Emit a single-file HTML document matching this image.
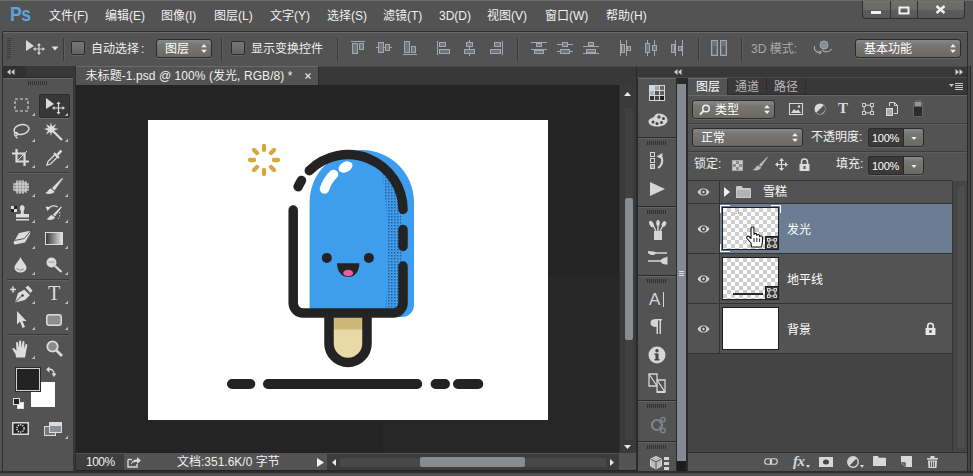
<!DOCTYPE html>
<html lang="zh-CN">
<head>
<meta charset="utf-8">
<title>未标题-1.psd @ 100% (发光, RGB/8) *</title>
<style>
html,body{margin:0;padding:0;background:#535353;}
body{width:973px;height:476px;overflow:hidden;position:relative;
 font-family:"Liberation Sans","Noto Sans CJK SC",sans-serif;font-size:12px;color:#e6e6e6;line-height:1;}
.abs{position:absolute;}
#app{position:absolute;left:0;top:0;width:973px;height:476px;background:#535353;overflow:hidden;}
#app div,#app svg,#app i,#app span{position:absolute;}
#menubar{left:0;top:0;width:973px;height:31px;background:#535353;border-top:1px solid #6b6b6b;box-sizing:border-box;}
#menubar .mi{top:9px;font-size:12px;color:#f0f0f0;white-space:nowrap;}
#pslogo{left:9.500px;top:2px;font-size:21px;font-weight:bold;color:#5ea2de;letter-spacing:-0.500px;transform:scaleX(0.840);transform-origin:0 0;font-family:"Liberation Sans",sans-serif;}
#winbtn{left:862px;top:0;width:103px;height:18px;background:linear-gradient(#747572 0,#6e6c68 12%,#6c6a66 55%,#5b5b5b 55%,#585858 100%);border:1px solid #303030;border-top:none;border-radius:0 0 4px 4px;box-sizing:border-box;}
#winbtn i{top:0;width:1px;height:17px;background:#303030;}
#optbar{left:2px;top:31px;width:966px;height:35px;background:#535353;border:1px solid #2e2e2e;border-bottom:none;box-sizing:border-box;box-shadow:inset 0 1px 0 #6a6a6a;}
.vsep{width:1px;background:#3a3a3a;box-shadow:1px 0 0 #5c5c5c;}
.chk{width:14px;height:14px;border:1px solid #2d2d2d;border-radius:2px;background:linear-gradient(#787774,#65635f);box-sizing:border-box;box-shadow:0 1px 0 #636363;}
.dd{border:1px solid #2b2b2b;border-radius:3px;background:linear-gradient(#858a92 0%,#777673 28%,#6b6964 100%);box-sizing:border-box;box-shadow:0 1px 0 #676767, inset 0 1px 0 #858585;color:#fff;}
.dd span{left:8px;top:2px;white-space:nowrap;}
.dd svg{right:4px;top:4px;}
.lbl{white-space:nowrap;color:#f0f0f0;}
.dim{color:#a9a9a9;}
.inp{background:#3a3a3a;border:1px solid #2b2b2b;border-right:none;border-radius:3px 0 0 3px;box-sizing:border-box;color:#fff;box-shadow:0 1px 0 #676767;}
.inp span{left:3px;top:4px;font-size:11px;letter-spacing:-0.300px;}
.ddb{border:1px solid #2b2b2b;border-radius:0 3px 3px 0;background:linear-gradient(#858a92 0%,#777673 28%,#6b6964 100%);box-sizing:border-box;box-shadow:0 1px 0 #676767, inset 0 1px 0 #858585;}
</style>
</head>
<body>
<div id="app">
<div id="menubar">
 <div id="pslogo">Ps</div>
 <div class="mi" style="left:49px">文件(F)</div>
 <div class="mi" style="left:105px">编辑(E)</div>
 <div class="mi" style="left:161px">图像(I)</div>
 <div class="mi" style="left:214px">图层(L)</div>
 <div class="mi" style="left:270px">文字(Y)</div>
 <div class="mi" style="left:327px">选择(S)</div>
 <div class="mi" style="left:383px">滤镜(T)</div>
 <div class="mi" style="left:439px">3D(D)</div>
 <div class="mi" style="left:487px">视图(V)</div>
 <div class="mi" style="left:545px">窗口(W)</div>
 <div class="mi" style="left:606px">帮助(H)</div>

 <div id="winbtn">
  <i style="left:27px"></i><i style="left:54px"></i>
  <svg style="left:0;top:0" width="102" height="18" viewBox="0 0 102 18">
   <rect x="8" y="10" width="10" height="3" fill="#f2f2f2"/>
   <rect x="36.500" y="6.500" width="9" height="6" fill="none" stroke="#f2f2f2" stroke-width="2"/>
   <path d="M73.500 5 L81.500 12 M81.500 5 L73.500 12" stroke="#f2f2f2" stroke-width="2.400" fill="none"/>
  </svg>
 </div>
</div>
<div id="optbar">
 <svg style="left:4px;top:6px" width="5" height="22" viewBox="0 0 5 22"><g fill="#3c3c3c"><rect y="0" width="4" height="1"/><rect y="2" width="4" height="1"/><rect y="4" width="4" height="1"/><rect y="6" width="4" height="1"/><rect y="8" width="4" height="1"/><rect y="10" width="4" height="1"/><rect y="12" width="4" height="1"/><rect y="14" width="4" height="1"/><rect y="16" width="4" height="1"/><rect y="18" width="4" height="1"/><rect y="20" width="4" height="1"/></g></svg>
 <svg style="left:22px;top:8px" width="22" height="16" viewBox="0 0 22 16">
  <path d="M1 0 L1 11 L9 6 Z" fill="#d8d8d8"/>
  <path d="M14 4 L14 14 M9 9 L19 9" stroke="#d8d8d8" stroke-width="1.200" fill="none"/>
  <path d="M14 3 L12 5.500 L16 5.500 Z M14 15 L12 12.500 L16 12.500 Z M8 9 L10.500 7 L10.500 11 Z M20 9 L17.500 7 L17.500 11 Z" fill="#d8d8d8"/>
 </svg>
 <svg style="left:48px;top:14px" width="8" height="5" viewBox="0 0 8 5"><path d="M0.500 0.500 L7.500 0.500 L4 4.500 Z" fill="#e0e0e0"/></svg>
 <div class="vsep" style="left:60px;top:6px;height:23px"></div>
 <div class="chk" style="left:68px;top:9px"></div>
 <div class="lbl" style="left:88px;top:11px">自动选<span style="position:static;letter-spacing:2px">择</span>:</div>
 <div class="dd" style="left:153px;top:7px;width:56px;height:19px"><span style="left:8px;top:3px">图层</span>
  <svg width="6" height="9" viewBox="0 0 7 11"><path d="M3.500 0 L7 4 L0 4 Z M3.500 11 L7 7 L0 7 Z" fill="#f0f0f0"/></svg></div>
 <div class="vsep" style="left:218px;top:6px;height:23px"></div>
 <div class="chk" style="left:228px;top:9px"></div>
 <div class="lbl" style="left:248px;top:11px">显示变换控件</div>
 <div class="vsep" style="left:334px;top:6px;height:23px"></div>
 <svg style="left:348px;top:9px" width="15" height="14" viewBox="0 0 15 14"><rect x="0" y="0" width="14" height="1" fill="#a4a8ac"/><rect x="1.5" y="2.5" width="5" height="10" fill="#70757b" stroke="#a4a8ac"/><rect x="8.5" y="2.5" width="4" height="6" fill="#70757b" stroke="#a4a8ac"/></svg>
 <svg style="left:373px;top:9px" width="17" height="14" viewBox="0 0 17 14"><rect x="0" y="6" width="16" height="1" fill="#a4a8ac"/><rect x="2.5" y="1.5" width="5" height="10" fill="#70757b" stroke="#a4a8ac"/><rect x="9.5" y="3.5" width="4" height="6" fill="#70757b" stroke="#a4a8ac"/></svg>
 <svg style="left:400px;top:9px" width="15" height="14" viewBox="0 0 15 14"><rect x="0" y="13" width="14" height="1" fill="#a4a8ac"/><rect x="1.5" y="0.5" width="5" height="11" fill="#70757b" stroke="#a4a8ac"/><rect x="8.5" y="5.5" width="4" height="6" fill="#70757b" stroke="#a4a8ac"/></svg>
 <svg style="left:434px;top:9px" width="14" height="14" viewBox="0 0 14 14"><rect x="0" y="0" width="1" height="14" fill="#a4a8ac"/><rect x="2.5" y="1.5" width="6" height="4" fill="#70757b" stroke="#a4a8ac"/><rect x="2.5" y="8.5" width="10" height="4" fill="#70757b" stroke="#a4a8ac"/></svg>
 <svg style="left:460px;top:8px" width="13" height="16" viewBox="0 0 13 16"><rect x="6" y="0" width="1" height="16" fill="#a4a8ac"/><rect x="3.5" y="2.5" width="6" height="4" fill="#70757b" stroke="#a4a8ac"/><rect x="1.5" y="9.5" width="10" height="4" fill="#70757b" stroke="#a4a8ac"/></svg>
 <svg style="left:486px;top:9px" width="14" height="14" viewBox="0 0 14 14"><rect x="13" y="0" width="1" height="14" fill="#a4a8ac"/><rect x="5.5" y="1.5" width="6" height="4" fill="#70757b" stroke="#a4a8ac"/><rect x="1.5" y="8.5" width="10" height="4" fill="#70757b" stroke="#a4a8ac"/></svg>
 <div class="vsep" style="left:514px;top:6px;height:23px"></div>
 <svg style="left:528px;top:9px" width="17" height="14" viewBox="0 0 17 14"><rect x="0" y="1" width="16" height="1" fill="#a4a8ac"/><rect x="5.5" y="2.5" width="5" height="3" fill="#70757b" stroke="#a4a8ac"/><rect x="0" y="8" width="16" height="1" fill="#a4a8ac"/><rect x="3.5" y="9.5" width="9" height="3" fill="#70757b" stroke="#a4a8ac"/></svg>
 <svg style="left:554px;top:9px" width="17" height="14" viewBox="0 0 17 14"><rect x="0" y="3" width="16" height="1" fill="#a4a8ac"/><rect x="5.5" y="1.5" width="5" height="4" fill="#70757b" stroke="#a4a8ac"/><rect x="0" y="10" width="16" height="1" fill="#a4a8ac"/><rect x="3.5" y="8.5" width="9" height="4" fill="#70757b" stroke="#a4a8ac"/></svg>
 <svg style="left:580px;top:9px" width="17" height="14" viewBox="0 0 17 14"><rect x="0" y="5" width="16" height="1" fill="#a4a8ac"/><rect x="5.5" y="1.5" width="5" height="3" fill="#70757b" stroke="#a4a8ac"/><rect x="0" y="12" width="16" height="1" fill="#a4a8ac"/><rect x="3.5" y="8.5" width="9" height="3" fill="#70757b" stroke="#a4a8ac"/></svg>
 <svg style="left:616px;top:8px" width="13" height="16" viewBox="0 0 13 16"><rect x="1" y="0" width="1" height="16" fill="#a4a8ac"/><rect x="2.5" y="4.5" width="3" height="8" fill="#70757b" stroke="#a4a8ac"/><rect x="7" y="0" width="1" height="16" fill="#a4a8ac"/><rect x="8.5" y="6.5" width="3" height="4" fill="#70757b" stroke="#a4a8ac"/></svg>
 <svg style="left:641px;top:8px" width="13" height="16" viewBox="0 0 13 16"><rect x="3" y="0" width="1" height="16" fill="#a4a8ac"/><rect x="1.5" y="3.5" width="4" height="9" fill="#70757b" stroke="#a4a8ac"/><rect x="10" y="0" width="1" height="16" fill="#a4a8ac"/><rect x="8.5" y="5.5" width="4" height="5" fill="#70757b" stroke="#a4a8ac"/></svg>
 <svg style="left:667px;top:8px" width="13" height="16" viewBox="0 0 13 16"><rect x="5" y="0" width="1" height="16" fill="#a4a8ac"/><rect x="1.5" y="4.5" width="3" height="8" fill="#70757b" stroke="#a4a8ac"/><rect x="12" y="0" width="1" height="16" fill="#a4a8ac"/><rect x="8.5" y="6.5" width="3" height="4" fill="#70757b" stroke="#a4a8ac"/></svg>
 <div class="vsep" style="left:695px;top:6px;height:23px"></div>
 <svg style="left:708px;top:8px" width="17" height="16" viewBox="0 0 17 16"><rect x="0.5" y="0.5" width="6" height="15" fill="#70757b" stroke="#a4a8ac"/><rect x="9.5" y="0.5" width="6" height="15" fill="#70757b" stroke="#a4a8ac"/><rect x="2" y="6" width="3" height="8" fill="#5a5e63"/><rect x="11" y="6" width="3" height="8" fill="#5a5e63"/></svg>
 <div class="vsep" style="left:738px;top:6px;height:23px"></div>
 <div class="lbl dim" style="left:748px;top:11px">3D 模式:</div>
 <svg style="left:810px;top:8px" width="20" height="15" viewBox="0 0 20 15">
  <circle cx="11" cy="5" r="4" fill="#888c91" stroke="#a4a8ac"/>
  <path d="M2 6 C0 9 3 13 8 12.500 L6.500 10.500 M8 12.500 L6 14" fill="none" stroke="#a4a8ac" stroke-width="1.200"/>
  <path d="M9 10 C12 13 17 12 18.500 9" fill="none" stroke="#a4a8ac" stroke-width="1.200"/>
 </svg>
 <div class="dd" style="left:852px;top:7px;width:106px;height:19px"><span style="left:8px;top:3px">基本功能</span>
  <svg width="6" height="9" viewBox="0 0 7 11"><path d="M3.500 0 L7 4 L0 4 Z M3.500 11 L7 7 L0 7 Z" fill="#f0f0f0"/></svg></div>
</div>
<div id="tools" style="left:2px;top:66px;width:72px;height:410px;background:#535353;border-left:1px solid #2e2e2e;border-right:1px solid #383838;box-sizing:border-box;">
 <div style="left:0;top:0;width:70px;height:11px;background:#383838;border-bottom:1px solid #2c2c2c;"></div>
 <div style="left:0;top:0;width:23px;height:11px;background:#303030;"></div>
 <svg style="left:4px;top:3px" width="8" height="6" viewBox="0 0 8 6"><path d="M3.500 0 L3.500 6 L0 3 Z M7.500 0 L7.500 6 L4 3 Z" fill="#d0d0d0"/></svg>
 <div style="left:0;top:12px;width:70px;height:1px;background:#686868;"></div>
 <svg style="left:25px;top:15px" width="20" height="5" viewBox="0 0 20 5"><g fill="#333"><rect x="0" width="1" height="4"/><rect x="2" width="1" height="4"/><rect x="4" width="1" height="4"/><rect x="6" width="1" height="4"/><rect x="8" width="1" height="4"/><rect x="10" width="1" height="4"/><rect x="12" width="1" height="4"/><rect x="14" width="1" height="4"/><rect x="16" width="1" height="4"/><rect x="18" width="1" height="4"/></g></svg>
 <div style="left:4px;top:106px;width:62px;height:1px;background:#3a3a3a;box-shadow:0 1px 0 #5e5e5e;"></div>
 <div style="left:4px;top:213px;width:62px;height:1px;background:#3a3a3a;box-shadow:0 1px 0 #5e5e5e;"></div>
 <div style="left:4px;top:268px;width:62px;height:1px;background:#3a3a3a;box-shadow:0 1px 0 #5e5e5e;"></div>
 <div style="left:36px;top:28px;width:31px;height:24px;background:#383838;border:1px solid #2c2c2c;border-radius:2px;box-sizing:border-box;box-shadow:0 1px 0 #6a6a6a;"></div>
 <svg style="left:28px;top:46px" width="4" height="4" viewBox="0 0 4 4"><path d="M4 0.800 L4 4 L0.800 4 Z" fill="#bcbcbc"/></svg>
 <svg style="left:61px;top:46px" width="4" height="4" viewBox="0 0 4 4"><path d="M4 0.800 L4 4 L0.800 4 Z" fill="#bcbcbc"/></svg>
 <svg style="left:28px;top:72px" width="4" height="4" viewBox="0 0 4 4"><path d="M4 0.800 L4 4 L0.800 4 Z" fill="#bcbcbc"/></svg>
 <svg style="left:61px;top:72px" width="4" height="4" viewBox="0 0 4 4"><path d="M4 0.800 L4 4 L0.800 4 Z" fill="#bcbcbc"/></svg>
 <svg style="left:28px;top:98px" width="4" height="4" viewBox="0 0 4 4"><path d="M4 0.800 L4 4 L0.800 4 Z" fill="#bcbcbc"/></svg>
 <svg style="left:61px;top:98px" width="4" height="4" viewBox="0 0 4 4"><path d="M4 0.800 L4 4 L0.800 4 Z" fill="#bcbcbc"/></svg>
 <svg style="left:28px;top:127px" width="4" height="4" viewBox="0 0 4 4"><path d="M4 0.800 L4 4 L0.800 4 Z" fill="#bcbcbc"/></svg>
 <svg style="left:61px;top:127px" width="4" height="4" viewBox="0 0 4 4"><path d="M4 0.800 L4 4 L0.800 4 Z" fill="#bcbcbc"/></svg>
 <svg style="left:28px;top:153px" width="4" height="4" viewBox="0 0 4 4"><path d="M4 0.800 L4 4 L0.800 4 Z" fill="#bcbcbc"/></svg>
 <svg style="left:61px;top:153px" width="4" height="4" viewBox="0 0 4 4"><path d="M4 0.800 L4 4 L0.800 4 Z" fill="#bcbcbc"/></svg>
 <svg style="left:28px;top:179px" width="4" height="4" viewBox="0 0 4 4"><path d="M4 0.800 L4 4 L0.800 4 Z" fill="#bcbcbc"/></svg>
 <svg style="left:61px;top:179px" width="4" height="4" viewBox="0 0 4 4"><path d="M4 0.800 L4 4 L0.800 4 Z" fill="#bcbcbc"/></svg>
 <svg style="left:28px;top:205px" width="4" height="4" viewBox="0 0 4 4"><path d="M4 0.800 L4 4 L0.800 4 Z" fill="#bcbcbc"/></svg>
 <svg style="left:61px;top:205px" width="4" height="4" viewBox="0 0 4 4"><path d="M4 0.800 L4 4 L0.800 4 Z" fill="#bcbcbc"/></svg>
 <svg style="left:28px;top:234px" width="4" height="4" viewBox="0 0 4 4"><path d="M4 0.800 L4 4 L0.800 4 Z" fill="#bcbcbc"/></svg>
 <svg style="left:61px;top:234px" width="4" height="4" viewBox="0 0 4 4"><path d="M4 0.800 L4 4 L0.800 4 Z" fill="#bcbcbc"/></svg>
 <svg style="left:28px;top:260px" width="4" height="4" viewBox="0 0 4 4"><path d="M4 0.800 L4 4 L0.800 4 Z" fill="#bcbcbc"/></svg>
 <svg style="left:61px;top:260px" width="4" height="4" viewBox="0 0 4 4"><path d="M4 0.800 L4 4 L0.800 4 Z" fill="#bcbcbc"/></svg>
 <svg style="left:28px;top:289px" width="4" height="4" viewBox="0 0 4 4"><path d="M4 0.800 L4 4 L0.800 4 Z" fill="#bcbcbc"/></svg>
 <svg style="left:11px;top:32px" width="15" height="14" viewBox="0 0 15 14"><rect x="1" y="1" width="13" height="12" fill="none" stroke="#dcdcdc" stroke-width="1.100" stroke-dasharray="3 2"/></svg>
 <svg style="left:42px;top:32px" width="20" height="17" viewBox="0 0 20 17"><path d="M1 0 L1 11 L9 6 Z" fill="#dcdcdc"/><path d="M13.500 5 L13.500 15 M8.500 10 L18.500 10" stroke="#dcdcdc" stroke-width="1.200"/><path d="M13.500 3.500 L11.500 6 L15.500 6 Z M13.500 16.500 L11.500 14 L15.500 14 Z M7 10 L9.500 8 L9.500 12 Z M20 10 L17.500 8 L17.500 12 Z" fill="#dcdcdc"/></svg>
 <svg style="left:9px;top:57px" width="18" height="16" viewBox="0 0 18 16"><ellipse cx="9.500" cy="6.500" rx="7.500" ry="4.800" fill="none" stroke="#dcdcdc" stroke-width="1.500" transform="rotate(-12 9.500 6.500)"/><circle cx="4" cy="11" r="1.600" fill="none" stroke="#dcdcdc" stroke-width="1.200"/><path d="M4 12.500 C3 14 5 15 6 15" fill="none" stroke="#dcdcdc" stroke-width="1.200"/></svg>
 <svg style="left:41px;top:56px" width="19" height="19" viewBox="0 0 19 19"><path d="M9 9 L18 18" stroke="#dcdcdc" stroke-width="2.200"/><path d="M7 0 L8 4.500 L12 2 L10 6 L14.500 7 L10 8.500 L12 12.500 L8 10 L7 14 L6 10 L2 12.500 L4 8.500 L0 7 L4 6 L2 2 L6 4.500 Z" fill="#dcdcdc"/></svg>
 <svg style="left:9px;top:83px" width="17" height="17" viewBox="0 0 17 17"><path d="M4.500 0 L4.500 12.500 L17 12.500 M0 4.500 L12.500 4.500 L12.500 17" fill="none" stroke="#dcdcdc" stroke-width="2.200"/><path d="M5.500 11.500 L15 2" stroke="#dcdcdc" stroke-width="1"/></svg>
 <svg style="left:43px;top:83px" width="17" height="17" viewBox="0 0 17 17"><path d="M1 16 L2 12.500 L9 5.500 L11.500 8 L4.500 15 Z" fill="none" stroke="#dcdcdc" stroke-width="1.300"/><path d="M8 4 L13 9" stroke="#dcdcdc" stroke-width="2"/><path d="M10.500 5 L14 1.200 C15 0.300 16.800 2 15.800 3 L12.300 6.800 Z" fill="#dcdcdc"/></svg>
 <svg style="left:9px;top:113px" width="18" height="16" viewBox="0 0 18 16"><ellipse cx="9" cy="8" rx="7.500" ry="5.500" fill="#8a8a8a" stroke="#dcdcdc" stroke-width="1" stroke-dasharray="1.500 1"/><path d="M5 1 L5 15 M8 1 L8 15 M11 1 L11 15 M14 2 L14 14 M1 5 L17 5 M1 8 L17 8 M1 11 L17 11" stroke="#dcdcdc" stroke-width="1"/></svg>
 <svg style="left:42px;top:112px" width="19" height="17" viewBox="0 0 19 17"><path d="M18 0.500 L17 0 L7 10 L9.500 12.500 Z" fill="#dcdcdc"/><path d="M6 10.500 C3 11 3.500 14 0 15 C4 17 9 15.500 9.500 13.500 Z" fill="#dcdcdc"/></svg>
 <svg style="left:8px;top:139px" width="20" height="17" viewBox="0 0 20 17"><rect x="0" y="1" width="3" height="3" fill="#dcdcdc"/><rect x="3" y="4" width="3" height="3" fill="#dcdcdc"/><rect x="0" y="4" width="3" height="3" fill="#222"/><rect x="3" y="1" width="3" height="3" fill="#222"/><path d="M10 0 C13.500 0 14.500 3 13 5 C12.500 6.500 12.500 8 13 9 L18 9 L18 12.500 L5 12.500 L5 9 L9.500 9 C10 8 10 6.500 9.500 5 C8 3 9 0 12 0 Z" fill="#dcdcdc"/><rect x="5" y="14" width="13" height="1.500" fill="#dcdcdc"/></svg>
 <svg style="left:42px;top:138px" width="18" height="17" viewBox="0 0 18 17"><path d="M17 3 L16 2.500 L8 10.500 L10 12.500 Z" fill="#dcdcdc"/><path d="M7 11 C4 11.500 4.500 14 1.500 15 C5 17 9.500 15.500 10 13.500 Z" fill="#dcdcdc"/><path d="M3 5 C5 1.500 10 1 12.500 3" fill="none" stroke="#dcdcdc" stroke-width="1.300"/><path d="M0.500 2.500 L5.500 3.200 L2.500 7 Z" fill="#dcdcdc"/><path d="M14.500 8 C15.500 11 14.500 13.500 13 15" fill="none" stroke="#dcdcdc" stroke-width="1" stroke-dasharray="1.500 1.500"/></svg>
 <svg style="left:10px;top:164px" width="18" height="16" viewBox="0 0 18 16"><path d="M6 3 L16 1 C17.500 1 17.500 3 17 4 L12 12.500 L2 14.500 C0.500 14.500 0.500 12.500 1 11.500 Z" fill="#dcdcdc"/><path d="M1.500 10.500 L11.500 8.500 L17 1.500" fill="none" stroke="#555" stroke-width="1"/></svg>
 <svg style="left:42px;top:166px" width="18" height="13" viewBox="0 0 18 13"><defs><linearGradient id="gr" x1="0" x2="1" y1="0" y2="0"><stop offset="0" stop-color="#333"/><stop offset="1" stop-color="#e8e8e8"/></linearGradient></defs><rect x="0.500" y="0.500" width="17" height="12" fill="url(#gr)" stroke="#dcdcdc"/></svg>
 <svg style="left:11px;top:191px" width="13" height="16" viewBox="0 0 13 16"><path d="M6.500 0 C8 4 12.500 7.500 12.500 10.500 C12.500 14 9.500 15.500 6.500 15.500 C3.500 15.500 0.500 14 0.500 10.500 C0.500 7.500 5 4 6.500 0 Z" fill="#dcdcdc"/><path d="M2.500 11 C3.500 13.500 8 14 10 11.500" fill="none" stroke="#888" stroke-width="1"/></svg>
 <svg style="left:43px;top:191px" width="17" height="16" viewBox="0 0 17 16"><circle cx="5.500" cy="5.500" r="5" fill="#dcdcdc"/><path d="M2.500 5 C3.500 3.500 4.500 6.500 5.500 5 C6.500 3.500 7.500 6.500 8.500 5" stroke="#888" fill="none" stroke-width="1"/><path d="M9 9 L15.500 15" stroke="#dcdcdc" stroke-width="2.200"/></svg>
 <svg style="left:7px;top:219px" width="23" height="18" viewBox="0 0 23 18"><path d="M0 4.500 L6 4.500 M3 1.500 L3 7.500" stroke="#dcdcdc" stroke-width="1.600"/><path d="M5 17.500 L8 8 L14.500 4.500 L20 10 L15 15 Z" fill="#dcdcdc"/><path d="M5.500 17 L12 10.500" stroke="#444" stroke-width="1"/><circle cx="12.500" cy="10.500" r="1.300" fill="#444"/><path d="M15.500 2.500 L18 0.500 L22.500 5.500 L20.500 8 Z" fill="#dcdcdc"/><path d="M14.500 4 L20.500 10" stroke="#535353" stroke-width="1"/></svg>
 <div style="left:43px;top:217px;width:16px;text-align:center;font-family:'Liberation Serif',serif;font-size:20px;color:#dcdcdc;">T</div>
 <svg style="left:13px;top:245px" width="11" height="18" viewBox="0 0 11 18"><path d="M1 0 L1 13.500 L4 10.500 L6.500 17 L9 16 L6.500 10 L10.500 10 Z" fill="#dcdcdc"/></svg>
 <svg style="left:43px;top:248px" width="16" height="12" viewBox="0 0 16 12"><rect x="0.750" y="0.750" width="14.500" height="10.500" rx="2.500" fill="#8d8d8d" stroke="#dcdcdc" stroke-width="1.500"/></svg>
 <svg style="left:9px;top:274px" width="18" height="18" viewBox="0 0 18 18"><path d="M4 17.500 L3.500 14 L0.500 9.500 C0 8 1.500 7.500 2.500 8.500 L4.500 11 L4 3 C4 1.500 6 1.500 6 3 L6.800 8 L7 1.500 C7 0 9 0 9.200 1.500 L9.500 8 L10.500 2 C10.800 0.500 12.500 1 12.500 2.500 L12 8.500 L13.500 4.500 C14 3.500 15.500 4 15.300 5.500 L14 12 L13 17.500 Z" fill="#dcdcdc"/></svg>
 <svg style="left:43px;top:274px" width="17" height="17" viewBox="0 0 17 17"><circle cx="6.500" cy="6.500" r="5.200" fill="#8a8a8a" stroke="#dcdcdc" stroke-width="1.800"/><path d="M10.500 10.500 L16 16" stroke="#dcdcdc" stroke-width="2.600"/></svg>
 <div style="left:28px;top:316px;width:24px;height:25px;background:#fff;border:1px solid #fff;box-sizing:border-box;"></div>
 <div style="left:12px;top:301px;width:26px;height:25px;background:#232323;border:1px solid #2a2a2a;box-shadow:inset 0 0 0 1px #d0d0d0;box-sizing:border-box;"></div>
 <svg style="left:43px;top:300px" width="11" height="11" viewBox="0 0 11 11"><path d="M2.500 3.500 C6 2.500 8 5 8 8" fill="none" stroke="#dcdcdc" stroke-width="1.300"/><path d="M0 3.500 L3.500 0.500 L3.500 6.500 Z M8 11 L5.500 7.500 L10.500 7.500 Z" fill="#dcdcdc"/></svg>
 <svg style="left:10px;top:332px" width="12" height="11" viewBox="0 0 12 11"><rect x="4.500" y="4.500" width="6" height="6" fill="#fff" stroke="#ddd"/><rect x="0.500" y="0.500" width="6" height="6" fill="#222" stroke="#ddd"/></svg>
 <svg style="left:9px;top:356px" width="18" height="14" viewBox="0 0 18 14"><rect x="0.750" y="0.750" width="15.500" height="11.500" fill="#262626" stroke="#dcdcdc" stroke-width="1.500"/><circle cx="8.500" cy="6.500" r="3.600" fill="none" stroke="#fff" stroke-width="1.300" stroke-dasharray="1.200 1.100"/></svg>
 <svg style="left:41px;top:356px" width="19" height="15" viewBox="0 0 19 15"><rect x="0.500" y="4.500" width="11" height="9" fill="#777" stroke="#dcdcdc"/><rect x="5.500" y="0.500" width="12" height="10" fill="#8a9097" stroke="#dcdcdc"/><rect x="6" y="1" width="11" height="3" fill="#dcdcdc"/></svg>
 <svg style="left:61px;top:369px" width="4" height="4" viewBox="0 0 4 4"><path d="M4 0.800 L4 4 L0.800 4 Z" fill="#bcbcbc"/></svg>
</div>
<div id="doc" style="left:74px;top:66px;width:562px;height:410px;background:#242424;">
 <div style="left:0;top:0;width:2px;height:410px;background:#383838;border-right:1px solid #2c2c2c;box-sizing:border-box;"></div>
 <div style="left:2px;top:0;width:560px;height:19px;background:#383838;border-top:1px solid #4a4a4a;box-sizing:border-box;"></div>
 <div style="left:2px;top:0;width:243px;height:19px;background:#535353;border-top:1px solid #6a6a6a;border-right:1px solid #2c2c2c;box-sizing:border-box;"><span class="lbl" style="left:9.500px;top:3px;letter-spacing:0.070px;">未标题-1.psd @ 100% (发光, RGB/8) *</span><svg style="left:229px;top:6px" width="6" height="6" viewBox="0 0 6 6"><path d="M0.500 0.500 L5.500 5.500 M5.500 0.500 L0.500 5.500" stroke="#e0e0e0" stroke-width="1.300"/></svg></div>
 <div id="canvas" style="left:74px;top:54px;width:400px;height:300px;background:#fff;overflow:hidden;">
  <svg style="left:0;top:0" width="400" height="300" viewBox="0 0 400 300">
   <defs><pattern id="dots" width="3" height="3" patternUnits="userSpaceOnUse"><rect width="3" height="3" fill="#3f9dee"/><rect x="0" y="0" width="1.500" height="1.500" fill="#2b5f94"/></pattern></defs>
   <path d="M161.600 197 L161.600 82.200 A52.200 52.200 0 0 1 266 82.200 L266 185 A12 12 0 0 1 254 197 Z" fill="#3f9dee"/>
   <path d="M234 50 C246 62 252 76 253 92 L255 190 L237 192 C242 150 241 100 234 50 Z" fill="url(#dots)"/>
   <path d="M176.500 69 C178.500 63 181.500 58 185.500 54.500" fill="none" stroke="#fff" stroke-width="9.500" stroke-linecap="round"/>
   <ellipse cx="197.500" cy="47" rx="7.500" ry="5" fill="#fff" transform="rotate(-28 197.500 47)"/>
   <rect x="185" y="196" width="30" height="14" fill="#cdb678"/>
   <path d="M185 209.500 L215 209.500 L215 223.500 A15 15 0 0 1 185 223.500 Z" fill="#ead9a8"/>
   <g fill="none" stroke="#232323" stroke-width="9.500" stroke-linecap="round" stroke-linejoin="round">
    <path d="M145.2 90 L145.2 183 A10 10 0 0 0 155.2 193 L245.0 193 A10 10 0 0 0 255.0 183 L255.0 146"/>
    <path d="M255.0 109.500 L255.0 126.500"/>
    <path d="M161.3 50.7 A54.9 54.9 0 0 1 255.0 89.5"/>
    <path d="M150.1 66.7 A54.9 54.9 0 0 1 153.5 60.4"/>
    <path d="M181 197 L181 223.500 A19 19 0 0 0 219 223.500 L219 197"/>
   </g>
   <circle cx="178.800" cy="137.900" r="5" fill="#232323"/><circle cx="220.900" cy="137.900" r="5" fill="#232323"/>
   <path d="M189 143.300 L211.400 143.300 C211.400 152 206.500 157 200.200 157 C194 157 189 152 189 143.300 Z" fill="#232323"/>
   <ellipse cx="200.200" cy="153" rx="5" ry="3.200" fill="#e8609e"/>
   <path d="M84 264 L102.300 264 M120 264 L269.200 264 M287.600 264 L297 264 M310 264 L330.300 264" stroke="#232323" stroke-width="10" stroke-linecap="round"/>
   <path d="M126.0 40.0 L130.0 40.0 M123.1 47.1 L125.9 49.9 M116.0 50.0 L116.0 54.0 M108.9 47.1 L106.1 49.9 M106.0 40.0 L102.0 40.0 M108.9 32.9 L106.1 30.1 M116.0 30.0 L116.0 26.0 M123.1 32.9 L125.9 30.1 " stroke="#d6aa3a" stroke-width="4.300" stroke-linecap="round"/>
  </svg>
 </div>
 <div style="left:474px;top:209px;width:71px;height:178px;background:#272727;"></div>
 <div style="left:309px;top:354px;width:165px;height:33px;background:#272727;"></div>
 <div style="left:545px;top:19px;width:17px;height:369px;background:#3a3a3a;border-left:1px solid #2e2e2e;box-sizing:border-box;"></div>
 <div style="left:551px;top:132px;width:8px;height:142px;background:#8a8d90;border-radius:2px;"></div>
 <div style="left:551px;top:42px;width:8px;height:90px;background:#404040;"></div>
 <div style="left:551px;top:274px;width:8px;height:100px;background:#404040;"></div>
 <svg style="left:550px;top:26px" width="7" height="4" viewBox="0 0 9 5"><path d="M4.500 0 L9 5 L0 5 Z" fill="#e8e8e8"/></svg>
 <svg style="left:550px;top:379px" width="7" height="4" viewBox="0 0 9 5"><path d="M4.500 5 L9 0 L0 0 Z" fill="#e8e8e8"/></svg>
 <div style="left:2px;top:387px;width:560px;height:17px;background:#535353;box-sizing:border-box;"></div>
 <div style="left:2px;top:405px;width:560px;height:5px;background:#535353;"></div>
 <div style="left:2px;top:388px;width:48px;height:16px;background:#3e3e3e;box-sizing:border-box;"><span class="lbl" style="left:10px;top:2px;letter-spacing:-0.500px;">100%</span></div>
 <svg style="left:53px;top:390px" width="15" height="12" viewBox="0 0 15 12"><path d="M1 3.500 L1 11 L10 11 L10 8" fill="none" stroke="#d8d8d8" stroke-width="1.400"/><path d="M1 3.500 L5 3.500" stroke="#d8d8d8" stroke-width="1.400"/><path d="M4 8.500 C4.500 5 7 3.500 10 3.500 L10 1 L14 4.500 L10 8 L10 5.800 C7.500 5.800 5.500 6.500 4 8.500 Z" fill="#d8d8d8"/></svg>
 <span class="lbl" style="left:103px;top:390px;">文档:351.6K/0 字节</span>
 <svg style="left:243px;top:392px" width="7" height="9" viewBox="0 0 7 9"><path d="M0 0 L7 4.500 L0 9 Z" fill="#f0f0f0"/></svg>
 <div style="left:253px;top:388px;width:292px;height:16px;background:#3c3c3c;"></div>
 <div style="left:266px;top:392px;width:266px;height:9px;background:#484848;"></div>
 <div style="left:346px;top:391px;width:105px;height:10px;background:#8a8d90;border-radius:2px;"></div>
 <svg style="left:258px;top:393px" width="4" height="7" viewBox="0 0 4 7"><path d="M4 0 L4 7 L0 3.500 Z" fill="#e8e8e8"/></svg>
 <svg style="left:536px;top:393px" width="4" height="7" viewBox="0 0 4 7"><path d="M0 0 L0 7 L4 3.500 Z" fill="#e8e8e8"/></svg>
</div>
<div id="dock" style="left:636px;top:66px;width:337px;height:410px;background:#2a2a2a;">
 <div style="left:335px;top:0;width:2px;height:410px;background:#535353;"></div>
 <div style="left:332px;top:0;width:2px;height:405px;background:#454545;"></div>
 <div style="left:1px;top:405px;width:336px;height:5px;background:#535353;border-top:2px solid #484848;box-sizing:border-box;box-shadow:inset 0 1px 0 #2c2c2c;"></div>
 <div style="left:1px;top:0;width:330px;height:10px;background:#383838;border-top:1px solid #4a4a4a;border-bottom:1px solid #4a4a4a;box-sizing:content-box;"></div>
 <svg style="left:38px;top:3px" width="8" height="6" viewBox="0 0 8 6"><path d="M3.500 0 L3.500 6 L0 3 Z M7.500 0 L7.500 6 L4 3 Z" fill="#d0d0d0"/></svg>
 <svg style="left:319px;top:3px" width="8" height="6" viewBox="0 0 8 6"><path d="M0.500 0 L0.500 6 L4 3 Z M4.500 0 L4.500 6 L8 3 Z" fill="#d0d0d0"/></svg>
 <div style="left:2px;top:12px;width:38px;height:59px;background:#535353;border-top:1px solid #656565;box-sizing:border-box;"></div>
 <div style="left:2px;top:72px;width:38px;height:68px;background:#535353;border-top:1px solid #656565;box-sizing:border-box;"></div>
 <svg style="left:11px;top:75px" width="20" height="5" viewBox="0 0 20 5"><g fill="#303030"><rect x="0" width="1" height="4"/><rect x="2" width="1" height="4"/><rect x="4" width="1" height="4"/><rect x="6" width="1" height="4"/><rect x="8" width="1" height="4"/><rect x="10" width="1" height="4"/><rect x="12" width="1" height="4"/><rect x="14" width="1" height="4"/><rect x="16" width="1" height="4"/><rect x="18" width="1" height="4"/></g></svg>
 <div style="left:2px;top:141px;width:38px;height:68px;background:#535353;border-top:1px solid #656565;box-sizing:border-box;"></div>
 <svg style="left:11px;top:144px" width="20" height="5" viewBox="0 0 20 5"><g fill="#303030"><rect x="0" width="1" height="4"/><rect x="2" width="1" height="4"/><rect x="4" width="1" height="4"/><rect x="6" width="1" height="4"/><rect x="8" width="1" height="4"/><rect x="10" width="1" height="4"/><rect x="12" width="1" height="4"/><rect x="14" width="1" height="4"/><rect x="16" width="1" height="4"/><rect x="18" width="1" height="4"/></g></svg>
 <div style="left:2px;top:210px;width:38px;height:124px;background:#535353;border-top:1px solid #656565;box-sizing:border-box;"></div>
 <svg style="left:11px;top:213px" width="20" height="5" viewBox="0 0 20 5"><g fill="#303030"><rect x="0" width="1" height="4"/><rect x="2" width="1" height="4"/><rect x="4" width="1" height="4"/><rect x="6" width="1" height="4"/><rect x="8" width="1" height="4"/><rect x="10" width="1" height="4"/><rect x="12" width="1" height="4"/><rect x="14" width="1" height="4"/><rect x="16" width="1" height="4"/><rect x="18" width="1" height="4"/></g></svg>
 <div style="left:2px;top:335px;width:38px;height:40px;background:#535353;border-top:1px solid #656565;box-sizing:border-box;"></div>
 <svg style="left:11px;top:338px" width="20" height="5" viewBox="0 0 20 5"><g fill="#303030"><rect x="0" width="1" height="4"/><rect x="2" width="1" height="4"/><rect x="4" width="1" height="4"/><rect x="6" width="1" height="4"/><rect x="8" width="1" height="4"/><rect x="10" width="1" height="4"/><rect x="12" width="1" height="4"/><rect x="14" width="1" height="4"/><rect x="16" width="1" height="4"/><rect x="18" width="1" height="4"/></g></svg>
 <div style="left:2px;top:376px;width:38px;height:29px;background:#535353;border-top:1px solid #656565;box-sizing:border-box;"></div>
 <svg style="left:11px;top:379px" width="20" height="5" viewBox="0 0 20 5"><g fill="#303030"><rect x="0" width="1" height="4"/><rect x="2" width="1" height="4"/><rect x="4" width="1" height="4"/><rect x="6" width="1" height="4"/><rect x="8" width="1" height="4"/><rect x="10" width="1" height="4"/><rect x="12" width="1" height="4"/><rect x="14" width="1" height="4"/><rect x="16" width="1" height="4"/><rect x="18" width="1" height="4"/></g></svg>
 <svg style="left:13px;top:19px" width="16" height="16" viewBox="0 0 16 16"><rect width="16" height="16" fill="#d6d6d6"/><rect x="1" y="1" width="4" height="4" fill="#d8d8d8"/><rect x="6" y="1" width="4" height="4" fill="#9aa7b8"/><rect x="11" y="1" width="4" height="4" fill="#666"/><rect x="1" y="6" width="4" height="4" fill="#aab3c0"/><rect x="6" y="6" width="4" height="4" fill="#555"/><rect x="11" y="6" width="4" height="4" fill="#5d5d5d"/><rect x="1" y="11" width="4" height="4" fill="#333"/><rect x="6" y="11" width="4" height="4" fill="#444"/><rect x="11" y="11" width="4" height="4" fill="#1e1e1e"/></svg>
 <svg style="left:12px;top:47px" width="20" height="14" viewBox="0 0 20 14"><path d="M10 0.500 C16 0.500 19.500 3.500 19.500 7 C19.500 11 15 13.500 9.500 13.500 C4 13.500 0.500 11.500 0.500 8.500 C0.500 6 3 5.500 5 4.500 C7 3.500 7 0.500 10 0.500 Z" fill="#d6d6d6"/><circle cx="5" cy="9" r="1.500" fill="#444"/><circle cx="9" cy="10.500" r="1.500" fill="#444"/><circle cx="13.500" cy="9.500" r="1.500" fill="#444"/><circle cx="15.500" cy="5.500" r="1.500" fill="#444"/><circle cx="11" cy="4" r="1.700" fill="#535353"/></svg>
 <svg style="left:14px;top:86px" width="16" height="17" viewBox="0 0 16 17"><rect x="0.500" y="0.500" width="4" height="4" fill="none" stroke="#d6d6d6"/><rect x="0.500" y="6.500" width="4" height="4" fill="none" stroke="#d6d6d6"/><rect x="0.500" y="12.500" width="4" height="4" fill="#999" stroke="#d6d6d6"/><path d="M8 16 C13 13 13.500 7 10 3.500" fill="none" stroke="#d6d6d6" stroke-width="2"/><path d="M6.500 4.500 L12.500 1 L12 7 Z" fill="#d6d6d6"/></svg>
 <svg style="left:14px;top:116px" width="15" height="14" viewBox="0 0 15 14"><path d="M0 0 L15 7 L0 14 Z" fill="#d6d6d6"/></svg>
 <svg style="left:12px;top:154px" width="19" height="20" viewBox="0 0 19 20"><rect x="6" y="11" width="8" height="9" fill="#d6d6d6"/><path d="M8 11 L4.500 4 M10 11 L10 3 M12 11 L15.500 4.500" stroke="#d6d6d6" stroke-width="1.400"/><ellipse cx="3.500" cy="4" rx="2" ry="3.500" fill="#d6d6d6" transform="rotate(-25 3.500 4)"/><ellipse cx="10" cy="3" rx="1.800" ry="3" fill="#d6d6d6"/><ellipse cx="16" cy="4" rx="2" ry="3" fill="#d6d6d6" transform="rotate(30 16 4)"/></svg>
 <svg style="left:12px;top:184px" width="20" height="15" viewBox="0 0 20 15"><path d="M5 3 L19 3" stroke="#d6d6d6" stroke-width="1.500"/><path d="M0 1 C3 1.500 7 1 8 3 C7 5.500 3 6 0 3 Z" fill="#d6d6d6"/><path d="M0 11 L14 11" stroke="#d6d6d6" stroke-width="1.500"/><path d="M19.500 6.500 C17 8 13 8 12.500 11 C13 14 17 14.500 19.500 14.500 Z" fill="#d6d6d6"/></svg>
 <div style="left:13px;top:225px;font-size:17px;color:#d6d6d6;font-family:'Liberation Sans',sans-serif;">A</div>
 <div style="left:27px;top:226px;width:1px;height:15px;background:#d6d6d6;"></div>
 <svg style="left:14px;top:253px" width="12" height="15" viewBox="0 0 12 15"><path d="M6 0 L12 0 L12 1.500 L11 1.500 L11 15 L9.500 15 L9.500 1.500 L8 1.500 L8 15 L6.500 15 L6.500 8 C2.500 8 0.500 6.500 0.500 4 C0.500 1.500 2.500 0 6 0 Z" fill="#d6d6d6"/></svg>
 <svg style="left:12px;top:280px" width="18" height="18" viewBox="0 0 18 18"><circle cx="9" cy="9" r="8.500" fill="#d6d6d6"/><circle cx="9" cy="4.800" r="1.700" fill="#444"/><rect x="7.500" y="7.500" width="3" height="6.500" fill="#444"/><rect x="6.500" y="7.500" width="2" height="1.500" fill="#444"/><rect x="6.500" y="13" width="5" height="1.500" fill="#444"/></svg>
 <svg style="left:12px;top:307px" width="18" height="20" viewBox="0 0 18 20"><path d="M1 1 L9 1 L9 13 L1 13 Z M9 7 L17 7 L17 19 L9 19 Z" fill="none" stroke="#d6d6d6" stroke-width="1.300"/><path d="M1 1 L9 13 M9 7 L17 19" stroke="#d6d6d6" stroke-width="1.300"/><path d="M9 19 L17 19" stroke="#d6d6d6" stroke-width="2"/></svg>
 <svg style="left:14px;top:350px" width="17" height="18" viewBox="0 0 17 18"><circle cx="7" cy="9" r="5" fill="none" stroke="#7d858d" stroke-width="2.200"/><circle cx="13" cy="3.500" r="2.200" fill="none" stroke="#7d858d" stroke-width="1.300"/><circle cx="13" cy="14.500" r="2.200" fill="none" stroke="#7d858d" stroke-width="1.300"/><path d="M9 7 L12 4.500 M9 11 L12 13.500" stroke="#7d858d" stroke-width="1.300"/></svg>
 <svg style="left:14px;top:390px" width="19" height="16" viewBox="0 0 19 16"><path d="M6 0.500 L11.500 3 L11.500 10 L6 13 L0.500 10 L0.500 3 Z" fill="#bbb" stroke="#d6d6d6"/><path d="M0.500 3 L6 6 L11.500 3 M6 6 L6 13" fill="none" stroke="#555" stroke-width="1"/><rect x="14" y="1" width="5" height="3" fill="#d6d6d6"/><rect x="14" y="6" width="5" height="3" fill="#d6d6d6"/><rect x="14" y="11" width="5" height="3" fill="#d6d6d6"/></svg>
 <div style="left:41px;top:18px;width:9px;height:377px;background:#838a93;"></div>
 <div style="left:41px;top:395px;width:9px;height:10px;background:#1c1c1c;"></div>
 <svg style="left:43px;top:205px" width="5" height="6" viewBox="0 0 5 6"><g fill="#e0e0e0"><rect y="0" width="5" height="1"/><rect y="2" width="5" height="1"/><rect y="4" width="5" height="1"/></g></svg>
 <div id="layers" style="left:52px;top:12px;width:279px;height:393px;background:#535353;">
  <div style="left:0;top:0;width:279px;height:17px;background:#383838;border-bottom:1px solid #2c2c2c;box-sizing:border-box;"></div>
  <div style="left:0;top:0;width:40px;height:17px;background:#535353;border-top:1px solid #6a6a6a;border-right:1px solid #2c2c2c;box-sizing:border-box;"><span class="lbl" style="left:8px;top:2px;color:#fff">图层</span></div>
  <div style="left:40px;top:0;width:39px;height:16px;border-right:1px solid #2c2c2c;box-sizing:border-box;"><span class="lbl" style="left:7px;top:3px;color:#b8b8b8">通道</span></div>
  <div style="left:79px;top:0;width:39px;height:16px;border-right:1px solid #2c2c2c;box-sizing:border-box;"><span class="lbl" style="left:7px;top:3px;color:#b8b8b8">路径</span></div>
  <svg style="left:261px;top:5px" width="14" height="8" viewBox="0 0 14 8"><g fill="#c8c8c8"><rect x="6" y="0" width="8" height="1"/><rect x="6" y="2" width="8" height="1"/><rect x="6" y="4" width="8" height="1"/><rect x="6" y="6" width="8" height="1"/><path d="M0 1 L5 1 L2.500 4 Z"/></g></svg>
  <div style="left:0;top:17px;width:279px;height:1px;background:#686868;"></div>
  <div class="dd" style="left:4px;top:22px;width:83px;height:19px"><svg style="left:6px;top:3px;right:auto" width="12" height="12" viewBox="0 0 12 12"><circle cx="7" cy="4.500" r="3.300" fill="none" stroke="#eee" stroke-width="1.500"/><path d="M4.500 7 L1 10.500" stroke="#eee" stroke-width="2"/></svg><span style="left:22px;top:3px">类型</span>
   <svg width="6" height="9" viewBox="0 0 7 11"><path d="M3.500 0 L7 4 L0 4 Z M3.500 11 L7 7 L0 7 Z" fill="#f0f0f0"/></svg></div>
  <svg style="left:101px;top:25px" width="14" height="12" viewBox="0 0 14 12" preserveAspectRatio="none"><rect x="0.500" y="0.500" width="13" height="11" fill="none" stroke="#dadada"/><path d="M2 10 L5 6 L7 8 L9 6.500 L12 10 Z" fill="#dadada"/><circle cx="10" cy="3.500" r="1.200" fill="#dadada"/></svg>
  <svg style="left:126px;top:25px" width="12" height="12" viewBox="0 0 12 12" preserveAspectRatio="none"><circle cx="6" cy="6" r="5.500" fill="#dadada"/><path d="M2.200 9.800 A5.400 5.400 0 0 0 9.800 2.200 Z" fill="#555"/></svg>
  <div style="left:150px;top:23px;font-family:'Liberation Serif',serif;font-weight:bold;font-size:15px;color:#dadada;">T</div>
  <svg style="left:174px;top:25px" width="12" height="12" viewBox="-0.500 -0.500 14 14" preserveAspectRatio="none"><rect x="2" y="2" width="9" height="9" fill="none" stroke="#dadada" stroke-width="1.200"/><rect x="0" y="0" width="3.500" height="3.500" fill="#535353" stroke="#dadada" stroke-width="1"/><rect x="9.500" y="0" width="3.500" height="3.500" fill="#535353" stroke="#dadada"/><rect x="0" y="9.500" width="3.500" height="3.500" fill="#535353" stroke="#dadada"/><rect x="9.500" y="9.500" width="3.500" height="3.500" fill="#535353" stroke="#dadada"/></svg>
  <svg style="left:198px;top:24px" width="12" height="14" viewBox="0 0 12 14" preserveAspectRatio="none"><path d="M3.500 4 L3.500 0.500 L8.500 0.500 L11.500 3.500 L11.500 11.500 L8 11.500" fill="none" stroke="#dadada"/><path d="M8.500 0.500 L8.500 3.500 L11.500 3.500" fill="none" stroke="#dadada"/><rect x="0.500" y="6.500" width="6" height="7" fill="#aaa" stroke="#dadada"/></svg>
  <svg style="left:225px;top:22px" width="10" height="17" viewBox="0 0 10 17" preserveAspectRatio="none"><rect x="0.500" y="0.500" width="9" height="16" rx="1" fill="#2c2c2c" stroke="#666"/><rect x="1.500" y="1.500" width="7" height="5" fill="#8f979f"/></svg>
  <div style="left:0;top:45px;width:279px;height:1px;background:#3c3c3c;box-shadow:0 1px 0 #5e5e5e;"></div>
  <div class="dd" style="left:4px;top:50px;width:111px;height:19px"><span style="left:8px;top:3px">正常</span>
   <svg width="6" height="9" viewBox="0 0 7 11"><path d="M3.500 0 L7 4 L0 4 Z M3.500 11 L7 7 L0 7 Z" fill="#f0f0f0"/></svg></div>
  <span class="lbl" style="left:123px;top:53px">不透明度:</span>
  <div class="inp" style="left:180px;top:50px;width:36px;height:19px"><span>100%</span></div>
  <div class="ddb" style="left:215px;top:50px;width:21px;height:19px"><svg style="left:7px;top:8px" width="6" height="3" viewBox="0 0 7 4"><path d="M0 0 L7 0 L3.500 4 Z" fill="#f0f0f0"/></svg></div>
  <div style="left:0;top:73px;width:279px;height:1px;background:#3c3c3c;box-shadow:0 1px 0 #5e5e5e;"></div>
  <span class="lbl" style="left:6px;top:80px">锁定:</span>
  <svg style="left:44px;top:82px" width="11" height="11" viewBox="0 0 11 11" preserveAspectRatio="none"><rect x="0.500" y="0.500" width="10" height="10" fill="#8d8d8d" stroke="#aaa"/><rect x="1" y="1" width="3" height="3" fill="#ccc"/><rect x="7" y="1" width="3" height="3" fill="#ccc"/><rect x="4" y="4" width="3" height="3" fill="#ccc"/><rect x="1" y="7" width="3" height="3" fill="#ccc"/><rect x="7" y="7" width="3" height="3" fill="#ccc"/></svg>
  <svg style="left:64px;top:79px" width="17" height="14" viewBox="0 0 17 14" preserveAspectRatio="none"><path d="M16 0 L15 0 L7 8 L9 10 Z" fill="#b8bcc2"/><path d="M6 8.500 C3.500 9 4 12 0.500 12.500 C4 14.500 8.500 13 9 10.500 Z" fill="#b8bcc2"/></svg>
  <svg style="left:87px;top:80px" width="13" height="13" viewBox="0 0 13 13" preserveAspectRatio="none"><path d="M6.500 1 L6.500 12 M1 6.500 L12 6.500" stroke="#dadada" stroke-width="1.200"/><path d="M6.500 0 L4 3 L9 3 Z M6.500 13 L4 10 L9 10 Z M0 6.500 L3 4 L3 9 Z M13 6.500 L10 4 L10 9 Z" fill="#dadada"/></svg>
  <svg style="left:111px;top:80px" width="11" height="13" viewBox="0 0 11 13" preserveAspectRatio="none"><path d="M2.500 6 L2.500 4 C2.500 0 8.500 0 8.500 4 L8.500 6" fill="none" stroke="#dadada" stroke-width="1.600"/><rect x="0.500" y="6" width="10" height="7" fill="#dadada"/><rect x="4.500" y="8" width="2" height="3" fill="#555"/></svg>
  <span class="lbl" style="left:148px;top:80px">填充:</span>
  <div class="inp" style="left:180px;top:78px;width:36px;height:19px"><span>100%</span></div>
  <div class="ddb" style="left:215px;top:78px;width:21px;height:19px"><svg style="left:7px;top:8px" width="6" height="3" viewBox="0 0 7 4"><path d="M0 0 L7 0 L3.500 4 Z" fill="#f0f0f0"/></svg></div>
  <div style="left:0;top:102px;width:264px;height:1px;background:#333;"></div>
  <div style="left:0;top:103px;width:264px;height:23px;background:#535353;border-bottom:1px solid #333;box-sizing:border-box;"><div style="left:31px;top:0;width:233px;height:22px;background:#535353;border-left:1px solid #333;box-sizing:border-box;"></div><svg style="left:9px;top:7px" width="13" height="8" viewBox="0 0 16 10"><path d="M0.500 5 C3 1 6 0.500 8 0.500 C10 0.500 13 1 15.500 5 C13 9 10 9.500 8 9.500 C6 9.500 3 9 0.500 5 Z" fill="#d4d4d4"/><circle cx="8" cy="5" r="3.500" fill="#444"/><circle cx="8" cy="5" r="1.600" fill="#d4d4d4"/></svg></div>
  <div style="left:0;top:126px;width:264px;height:50px;background:#535353;border-bottom:1px solid #333;box-sizing:border-box;"><div style="left:31px;top:0;width:233px;height:49px;background:#6c7d93;border-left:1px solid #333;box-sizing:border-box;"></div><svg style="left:9px;top:21px" width="13" height="8" viewBox="0 0 16 10"><path d="M0.500 5 C3 1 6 0.500 8 0.500 C10 0.500 13 1 15.500 5 C13 9 10 9.500 8 9.500 C6 9.500 3 9 0.500 5 Z" fill="#d4d4d4"/><circle cx="8" cy="5" r="3.500" fill="#444"/><circle cx="8" cy="5" r="1.600" fill="#d4d4d4"/></svg></div>
  <div style="left:0;top:176px;width:264px;height:50px;background:#535353;border-bottom:1px solid #333;box-sizing:border-box;"><div style="left:31px;top:0;width:233px;height:49px;background:#535353;border-left:1px solid #333;box-sizing:border-box;"></div><svg style="left:9px;top:21px" width="13" height="8" viewBox="0 0 16 10"><path d="M0.500 5 C3 1 6 0.500 8 0.500 C10 0.500 13 1 15.500 5 C13 9 10 9.500 8 9.500 C6 9.500 3 9 0.500 5 Z" fill="#d4d4d4"/><circle cx="8" cy="5" r="3.500" fill="#444"/><circle cx="8" cy="5" r="1.600" fill="#d4d4d4"/></svg></div>
  <div style="left:0;top:226px;width:264px;height:50px;background:#535353;border-bottom:1px solid #333;box-sizing:border-box;"><div style="left:31px;top:0;width:233px;height:49px;background:#535353;border-left:1px solid #333;box-sizing:border-box;"></div><svg style="left:9px;top:21px" width="13" height="8" viewBox="0 0 16 10"><path d="M0.500 5 C3 1 6 0.500 8 0.500 C10 0.500 13 1 15.500 5 C13 9 10 9.500 8 9.500 C6 9.500 3 9 0.500 5 Z" fill="#d4d4d4"/><circle cx="8" cy="5" r="3.500" fill="#444"/><circle cx="8" cy="5" r="1.600" fill="#d4d4d4"/></svg></div>
  <svg style="left:36px;top:109px" width="6" height="10" viewBox="0 0 6 10" preserveAspectRatio="none"><path d="M0 0 L6 5 L0 10 Z" fill="#f0f0f0"/></svg>
  <svg style="left:48px;top:108px" width="15" height="12" viewBox="0 0 15 12" preserveAspectRatio="none"><path d="M0 1.500 C0 0.500 0.500 0 1.500 0 L5.500 0 L7 2 L14 2 C14.500 2 15 2.500 15 3 L15 12 L0 12 Z" fill="#c9c9c9"/><rect x="1" y="4" width="13" height="7" fill="#b2b2b2"/></svg>
  <span class="lbl" style="left:75px;top:108px;color:#fff">雪糕</span>
  <div style="left:34px;top:129px;width:57px;height:43px;background-color:#fff;background-image:linear-gradient(45deg,#ccc 25%,transparent 25%,transparent 75%,#ccc 75%),linear-gradient(45deg,#ccc 25%,transparent 25%,transparent 75%,#ccc 75%);background-size:8px 8px;background-position:0 0,4px 4px;border:1px solid #1e1e1e;box-sizing:border-box;"></div>
  <div style="left:34px;top:179px;width:57px;height:43px;background-color:#fff;background-image:linear-gradient(45deg,#ccc 25%,transparent 25%,transparent 75%,#ccc 75%),linear-gradient(45deg,#ccc 25%,transparent 25%,transparent 75%,#ccc 75%);background-size:8px 8px;background-position:0 0,4px 4px;border:1px solid #1e1e1e;box-sizing:border-box;"></div>
  <div style="left:34px;top:229px;width:57px;height:43px;background:#fff;border:1px solid #1e1e1e;box-sizing:border-box;"></div>
  <svg style="left:32px;top:127px" width="61" height="47" viewBox="0 0 61 47"><path d="M0.500 8 L0.500 0.500 L10 0.500 M51 0.500 L60.500 0.500 L60.500 8 M0.500 39 L0.500 46.500 L10 46.500" fill="none" stroke="#fff"/></svg>
  <svg style="left:77px;top:158px" width="14" height="14" viewBox="0 0 14 14" preserveAspectRatio="none"><rect x="0" y="0" width="14" height="14" fill="#1e1e1e"/><rect x="1" y="1" width="12" height="12" fill="#3a3a3a"/><rect x="4" y="4" width="6" height="6" fill="none" stroke="#e6e6e6"/><rect x="2.500" y="2.500" width="2.500" height="2.500" fill="#3a3a3a" stroke="#e6e6e6" stroke-width="0.900"/><rect x="9" y="2.500" width="2.500" height="2.500" fill="#3a3a3a" stroke="#e6e6e6" stroke-width="0.900"/><rect x="2.500" y="9" width="2.500" height="2.500" fill="#3a3a3a" stroke="#e6e6e6" stroke-width="0.900"/><rect x="9" y="9" width="2.500" height="2.500" fill="#3a3a3a" stroke="#e6e6e6" stroke-width="0.900"/></svg>
  <svg style="left:77px;top:208px" width="14" height="14" viewBox="0 0 14 14" preserveAspectRatio="none"><rect x="0" y="0" width="14" height="14" fill="#1e1e1e"/><rect x="1" y="1" width="12" height="12" fill="#3a3a3a"/><rect x="4" y="4" width="6" height="6" fill="none" stroke="#e6e6e6"/><rect x="2.500" y="2.500" width="2.500" height="2.500" fill="#3a3a3a" stroke="#e6e6e6" stroke-width="0.900"/><rect x="9" y="2.500" width="2.500" height="2.500" fill="#3a3a3a" stroke="#e6e6e6" stroke-width="0.900"/><rect x="2.500" y="9" width="2.500" height="2.500" fill="#3a3a3a" stroke="#e6e6e6" stroke-width="0.900"/><rect x="9" y="9" width="2.500" height="2.500" fill="#3a3a3a" stroke="#e6e6e6" stroke-width="0.900"/></svg>
  <svg style="left:47px;top:134px" width="6" height="4" viewBox="0 0 6 4" preserveAspectRatio="none"><rect x="0" y="1" width="2" height="1" fill="#d8ac3c"/><rect x="3" y="0" width="1" height="2" fill="#d8ac3c"/></svg>
  <div style="left:45px;top:215px;width:30px;height:1.500px;background:#2a2a2a;"></div>
  <svg style="left:58px;top:148px" width="18" height="22" viewBox="0 0 18 22" preserveAspectRatio="none"><path d="M5.500 21 L5 17 L1 12.500 C0 11 1.500 9.500 3 10.500 L5 12.500 L5 2.500 C5 0.500 8 0.500 8 2.500 L8 8.500 C8 7 10.800 7 10.800 8.800 L10.800 9.500 C11 8 13.600 8.200 13.600 10 L13.600 10.800 C14 9.500 16.500 9.800 16.500 11.500 L16.500 16 L15.500 21 Z" fill="#fff" stroke="#111" stroke-width="1.100" stroke-linejoin="round"/><path d="M8 12 L8 16 M10.800 12 L10.800 16 M13.600 12.500 L13.600 16" stroke="#111" stroke-width="0.900"/></svg>
  <span class="lbl" style="left:99px;top:146px;color:#fff">发光</span>
  <span class="lbl" style="left:99px;top:196px;color:#fff">地平线</span>
  <span class="lbl" style="left:99px;top:246px;color:#fff">背景</span>
  <svg style="left:237px;top:244px" width="11" height="13" viewBox="0 0 10 12" preserveAspectRatio="none"><path d="M2.500 5.500 L2.500 3.800 C2.500 0.300 7.500 0.300 7.500 3.800 L7.500 5.500" fill="none" stroke="#e6e6e6" stroke-width="1.500"/><rect x="0.500" y="5.500" width="9" height="6.500" fill="#e6e6e6"/><rect x="4" y="7.500" width="2" height="2.500" fill="#444"/></svg>
  <div style="left:0;top:276px;width:264px;height:98px;background:#444;"></div>
  <div style="left:264px;top:103px;width:15px;height:271px;background:#454545;border-left:1px solid #333;box-sizing:border-box;"></div>
  <div style="left:270px;top:108px;width:7px;height:262px;background:#4d4d4d;"></div>
  <div style="left:0;top:374px;width:279px;height:19px;background:#535353;border-top:1px solid #2e2e2e;box-sizing:border-box;"></div>
  <svg style="left:76px;top:379px" width="14" height="9" viewBox="0 0 15 9" preserveAspectRatio="none"><rect x="0.750" y="1.750" width="7.500" height="5.500" rx="2.700" fill="none" stroke="#d8d8d8" stroke-width="1.200"/><rect x="6.750" y="1.750" width="7.500" height="5.500" rx="2.700" fill="none" stroke="#d8d8d8" stroke-width="1.200"/></svg>
  <div style="left:105px;top:376px;font-family:'Liberation Serif',serif;font-style:italic;font-weight:bold;font-size:15px;color:#d8d8d8;letter-spacing:-0.5px;">fx</div>
  <svg style="left:118px;top:387px" width="4" height="3" viewBox="0 0 4 3" preserveAspectRatio="none"><path d="M0 0 L4 0 L2 3 Z" fill="#d8d8d8"/></svg>
  <svg style="left:131px;top:379px" width="14" height="10" viewBox="0 0 14 12" preserveAspectRatio="none"><rect x="0" y="0" width="14" height="12" fill="#d8d8d8"/><circle cx="7" cy="6" r="3" fill="#444"/></svg>
  <svg style="left:159px;top:378px" width="12" height="12" viewBox="0 0 13 13" preserveAspectRatio="none"><circle cx="6.500" cy="6.500" r="5.700" fill="none" stroke="#d8d8d8" stroke-width="1.500"/><path d="M2.500 10.500 A5.700 5.700 0 0 1 10.500 2.500 Z" fill="#d8d8d8"/></svg>
  <svg style="left:172px;top:387px" width="4" height="3" viewBox="0 0 4 3" preserveAspectRatio="none"><path d="M0 0 L4 0 L2 3 Z" fill="#d8d8d8"/></svg>
  <svg style="left:185px;top:378px" width="13" height="10" viewBox="0 0 15 12" preserveAspectRatio="none"><path d="M0 1.500 C0 0.500 0.500 0 1.500 0 L5.500 0 L7 2 L14 2 C14.500 2 15 2.500 15 3 L15 12 L0 12 Z" fill="#d8d8d8"/></svg>
  <svg style="left:213px;top:378px" width="11" height="11" viewBox="0 0 13 13" preserveAspectRatio="none"><path d="M0 0 L13 0 L13 13 L5 13 L0 8 Z" fill="#d8d8d8"/><path d="M0 8 L5 8 L5 13 Z" fill="#777"/><path d="M0.500 8 L5 8 L5 12.500" fill="none" stroke="#444" stroke-width="1"/></svg>
  <svg style="left:239px;top:378px" width="11" height="12" viewBox="0 0 11 12" preserveAspectRatio="none"><rect x="0" y="2" width="11" height="1.600" fill="#d8d8d8"/><rect x="3.500" y="0" width="4" height="2" fill="#d8d8d8"/><path d="M1 4.500 L10 4.500 L9.500 12 L1.500 12 Z" fill="#d8d8d8"/><path d="M3.500 5.500 L3.700 11 M5.500 5.500 L5.500 11 M7.500 5.500 L7.300 11" stroke="#555" stroke-width="1"/></svg>
 </div>
</div>
<div style="left:0;top:471px;width:973px;height:2px;background:#2c2c2c;"></div><div style="left:0;top:473px;width:973px;height:3px;background:#4e4e4e;"></div>
</div>
</body>
</html>
